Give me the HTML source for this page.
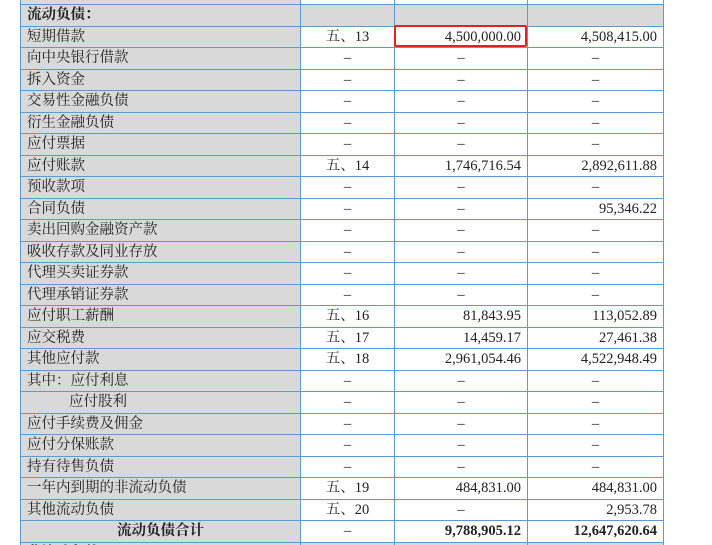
<!DOCTYPE html>
<html><head><meta charset="utf-8"><style>
html,body{margin:0;padding:0;background:#fff;width:712px;height:545px;overflow:hidden;position:relative}
table{position:absolute;left:20px;top:-17.5px;border-collapse:collapse;table-layout:fixed;font-family:"Liberation Serif","Noto Serif CJK SC",serif;font-size:14.5px;color:#222}
td{border:1px solid #5b9bd5;height:20.5px;padding:0;white-space:nowrap;overflow:hidden;line-height:1;vertical-align:middle}
td.l{background:#d9d9d9;padding-left:6px}
td.c{text-align:center}
td.r{text-align:right;padding-right:6px}
tr.g td{background:#d9d9d9}
b{font-weight:bold}
.box{position:absolute;left:394px;top:25px;width:129px;height:18px;border:2px solid #e8201a;border-radius:2px}
</style></head><body>
<table>
<col style="width:280px"><col style="width:94px"><col style="width:133px"><col style="width:136px">
<tr><td class="l"></td><td class="c"></td><td class="r"></td><td class="r"></td></tr>
<tr class="g"><td class="l"><b>流动负债：</b></td><td></td><td></td><td></td></tr>
<tr><td class="l">短期借款</td><td class="c">五、13</td><td class="r">4,500,000.00</td><td class="r">4,508,415.00</td></tr>
<tr><td class="l">向中央银行借款</td><td class="c">–</td><td class="c">–</td><td class="c">–</td></tr>
<tr><td class="l">拆入资金</td><td class="c">–</td><td class="c">–</td><td class="c">–</td></tr>
<tr><td class="l">交易性金融负债</td><td class="c">–</td><td class="c">–</td><td class="c">–</td></tr>
<tr><td class="l">衍生金融负债</td><td class="c">–</td><td class="c">–</td><td class="c">–</td></tr>
<tr><td class="l">应付票据</td><td class="c">–</td><td class="c">–</td><td class="c">–</td></tr>
<tr><td class="l">应付账款</td><td class="c">五、14</td><td class="r">1,746,716.54</td><td class="r">2,892,611.88</td></tr>
<tr><td class="l">预收款项</td><td class="c">–</td><td class="c">–</td><td class="c">–</td></tr>
<tr><td class="l">合同负债</td><td class="c">–</td><td class="c">–</td><td class="r">95,346.22</td></tr>
<tr><td class="l">卖出回购金融资产款</td><td class="c">–</td><td class="c">–</td><td class="c">–</td></tr>
<tr><td class="l">吸收存款及同业存放</td><td class="c">–</td><td class="c">–</td><td class="c">–</td></tr>
<tr><td class="l">代理买卖证券款</td><td class="c">–</td><td class="c">–</td><td class="c">–</td></tr>
<tr><td class="l">代理承销证券款</td><td class="c">–</td><td class="c">–</td><td class="c">–</td></tr>
<tr><td class="l">应付职工薪酬</td><td class="c">五、16</td><td class="r">81,843.95</td><td class="r">113,052.89</td></tr>
<tr><td class="l">应交税费</td><td class="c">五、17</td><td class="r">14,459.17</td><td class="r">27,461.38</td></tr>
<tr><td class="l">其他应付款</td><td class="c">五、18</td><td class="r">2,961,054.46</td><td class="r">4,522,948.49</td></tr>
<tr><td class="l">其中：应付利息</td><td class="c">–</td><td class="c">–</td><td class="c">–</td></tr>
<tr><td class="l" style="padding-left:48px">应付股利</td><td class="c">–</td><td class="c">–</td><td class="c">–</td></tr>
<tr><td class="l">应付手续费及佣金</td><td class="c">–</td><td class="c">–</td><td class="c">–</td></tr>
<tr><td class="l">应付分保账款</td><td class="c">–</td><td class="c">–</td><td class="c">–</td></tr>
<tr><td class="l">持有待售负债</td><td class="c">–</td><td class="c">–</td><td class="c">–</td></tr>
<tr><td class="l">一年内到期的非流动负债</td><td class="c">五、19</td><td class="r">484,831.00</td><td class="r">484,831.00</td></tr>
<tr><td class="l">其他流动负债</td><td class="c">五、20</td><td class="c">–</td><td class="r">2,953.78</td></tr>
<tr><td class="l" style="text-align:center;padding:0"><b>流动负债合计</b></td><td class="c">–</td><td class="r"><b>9,788,905.12</b></td><td class="r"><b>12,647,620.64</b></td></tr>
<tr class="g"><td class="l"><b>非流动负债：</b></td><td></td><td></td><td></td></tr>
</table>
<div class="box"></div>
</body></html>
